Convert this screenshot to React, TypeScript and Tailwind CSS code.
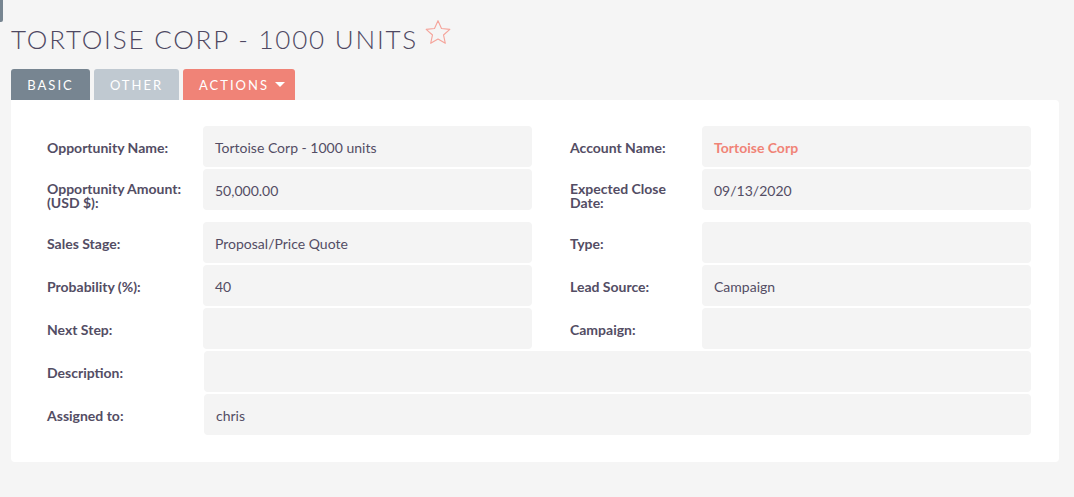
import React from 'react';

type Field = { label: React.ReactNode; value?: React.ReactNode; link?: boolean };

const rows: { left: Field; right: Field; tall?: boolean }[] = [
  {
    left: { label: 'Opportunity Name:', value: 'Tortoise Corp - 1000 units' },
    right: { label: 'Account Name:', value: 'Tortoise Corp', link: true },
  },
  {
    left: {
      label: (
        <>
          Opportunity Amount:
          <br />
          (USD $):
        </>
      ),
      value: '50,000.00',
    },
    right: {
      label: (
        <>
          Expected Close
          <br />
          Date:
        </>
      ),
      value: '09/13/2020',
    },
    tall: true,
  },
  {
    left: { label: 'Sales Stage:', value: 'Proposal/Price Quote' },
    right: { label: 'Type:' },
  },
  {
    left: { label: 'Probability (%):', value: '40' },
    right: { label: 'Lead Source:', value: 'Campaign' },
  },
  {
    left: { label: 'Next Step:' },
    right: { label: 'Campaign:' },
  },
];

function ValueBox({ field, wide }: { field: Field; wide?: boolean }) {
  return (
    <div
      className={`h-[41px] self-start rounded-[4px] bg-[#f4f4f4] pl-[12px] pt-[2px] flex items-center text-[14px] ${
        wide ? 'w-[827px]' : 'w-[329px]'
      } ${field.link ? 'text-[#f08377] font-bold' : ''}`}
    >
      {field.value}
    </div>
  );
}

function Star() {
  return (
    <svg width="28" height="27" viewBox="0 0 24 24" className="ml-[6px] -mt-[5px]">
      <polygon
        points="12,1.5 15.1,8.4 22.5,9.2 16.9,14.2 18.5,21.6 12,17.8 5.5,21.6 7.1,14.2 1.5,9.2 8.9,8.4"
        fill="none"
        stroke="#f5a49b"
        strokeWidth="1"
        strokeLinejoin="round"
      />
    </svg>
  );
}

const labelCls = 'self-center pt-[1px] text-[14px] font-bold leading-[14px]';

export default function App() {
  return (
    <div className="relative min-h-screen bg-[#f5f5f5] font-['Lato','Liberation_Sans',sans-serif] text-[#534d64]">
      {/* sidebar toggle stub */}
      <div className="absolute left-0 top-0 w-[3px] h-[22px] bg-[#778591] rounded-br-[2px]" />

      <div className="pl-[11px] pt-[24px]">
        <div className="flex items-start">
          <h1 className="text-[26px] leading-[1.2] tracking-[1.8px] uppercase font-light text-[#4e4862]">
            Tortoise Corp - 1000 units
          </h1>
          <Star />
        </div>

        {/* tabs */}
        <div className="mt-[14px] flex gap-[4px] text-white text-[13px] tracking-[2px]">
          <div className="w-[79px] h-[31px] pt-[2px] flex items-center justify-center rounded-t-[3px] bg-[#778591]">
            BASIC
          </div>
          <div className="w-[85px] h-[31px] pt-[2px] flex items-center justify-center rounded-t-[3px] bg-[#c0c9d1]">
            OTHER
          </div>
          <div className="w-[112px] h-[31px] pt-[2px] flex items-center pl-[16px] rounded-t-[3px] bg-[#f08377]">
            ACTIONS
            <span className="ml-[6px] -mt-[2px] w-0 h-0 border-l-[5px] border-r-[5px] border-t-[5px] border-l-transparent border-r-transparent border-t-white" />
          </div>
        </div>

        {/* detail panel */}
        <div className="w-[1048px] bg-white rounded-b-[4px] rounded-tr-[4px] pt-[26px] pb-[25px] pl-[36px]">
          {rows.map((r, i) => (
            <div key={i} className={`flex ${r.tall ? 'h-[53px]' : 'h-[43px]'}`}>
              <div className={`w-[156px] ${labelCls}`}>{r.left.label}</div>
              <ValueBox field={r.left} />
              <div className={`ml-[38px] w-[132px] ${labelCls}`}>{r.right.label}</div>
              <ValueBox field={r.right} />
            </div>
          ))}
          <div className="flex h-[43px]">
            <div className={`w-[157px] ${labelCls}`}>Description:</div>
            <ValueBox field={{ label: '' }} wide />
          </div>
          <div className="flex h-[43px]">
            <div className={`w-[157px] ${labelCls}`}>Assigned to:</div>
            <ValueBox field={{ label: '', value: 'chris' }} wide />
          </div>
        </div>
      </div>
    </div>
  );
}
